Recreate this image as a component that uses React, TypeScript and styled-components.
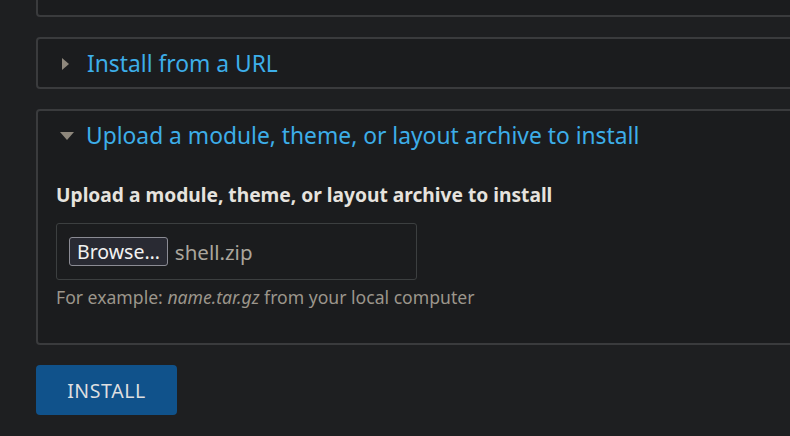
import React from 'react';
import styled, { createGlobalStyle } from 'styled-components';

const GlobalStyle = createGlobalStyle`
  html, body {
    margin: 0;
    padding: 0;
    background: #1e1f21;
    font-family: "Noto Sans", "Open Sans", sans-serif;
  }
`;

const Page = styled.div`
  width: 790px;
  height: 436px;
  overflow: hidden;
  padding-left: 36px;
  box-sizing: border-box;
  display: flex;
  flex-direction: column;
  gap: 20px;
`;

const Panel = styled.div<{ $cut?: boolean }>`
  margin-right: -40px;
  border: 2px solid #3a3b3d;
  border-radius: 4px;
  background: #1b1c1e;
  ${p => p.$cut && `margin-top: -40px; height: 53px; flex: none;`}
`;

const Summary = styled.div`
  height: 48px;
  display: flex;
  align-items: center;
  padding-left: 24px;
  gap: 16px;
  color: #3daee9;
  font-size: 22.8px;
  padding-top: 1px;
  box-sizing: border-box;
`;

const Arrow = styled.span<{ $open?: boolean }>`
  width: 0;
  height: 0;
  display: inline-block;
  ${p =>
    p.$open
      ? `border-left: 7px solid transparent; border-right: 7px solid transparent; border-top: 8px solid #8e877c; margin-left: -2px; margin-right: -4px;`
      : `border-top: 6px solid transparent; border-bottom: 6px solid transparent; border-left: 7px solid #8e877c; margin-right: 2px;`}
`;

const Body = styled.div`
  padding: 22px 18px 34px;
`;

const Label = styled.div`
  color: #e6e3de;
  font-size: 19.2px;
  font-weight: 700;
  line-height: 27px;
  margin-bottom: 15px;
`;

const FileBox = styled.div`
  width: 361px;
  height: 57px;
  box-sizing: border-box;
  border: 1px solid #3c3f40;
  border-radius: 3px;
  display: flex;
  align-items: center;
  padding-left: 12px;
  gap: 7px;
`;

const Browse = styled.button`
  height: 29px;
  box-sizing: border-box;
  padding: 0 7px;
  background: #292a33;
  border: 1px solid #8b8b94;
  border-radius: 3px;
  color: #f2f2f2;
  font-family: inherit;
  font-size: 19.5px;
  line-height: 1;
`;

const FileName = styled.span`
  color: #aaa59c;
  font-size: 20.5px;
`;

const Help = styled.div`
  margin-top: 5px;
  color: #9c968c;
  font-size: 17.6px;
  line-height: 24px;
  em { font-style: italic; }
`;

const InstallButton = styled.button`
  width: 141px;
  height: 50px;
  flex: none;
  border: none;
  border-radius: 4px;
  background: #10528b;
  color: #dedfe0;
  font-family: inherit;
  font-size: 19.5px;
  letter-spacing: 0.6px;
`;

export default function App() {
  return (
    <>
      <GlobalStyle />
      <Page>
        <Panel $cut />
        <Panel>
          <Summary>
            <Arrow />
            Install from a URL
          </Summary>
        </Panel>
        <Panel>
          <Summary>
            <Arrow $open />
            Upload a module, theme, or layout archive to install
          </Summary>
          <Body>
            <Label>Upload a module, theme, or layout archive to install</Label>
            <FileBox>
              <Browse>Browse…</Browse>
              <FileName>shell.zip</FileName>
            </FileBox>
            <Help>
              For example: <em>name.tar.gz</em> from your local computer
            </Help>
          </Body>
        </Panel>
        <div>
          <InstallButton>INSTALL</InstallButton>
        </div>
      </Page>
    </>
  );
}
